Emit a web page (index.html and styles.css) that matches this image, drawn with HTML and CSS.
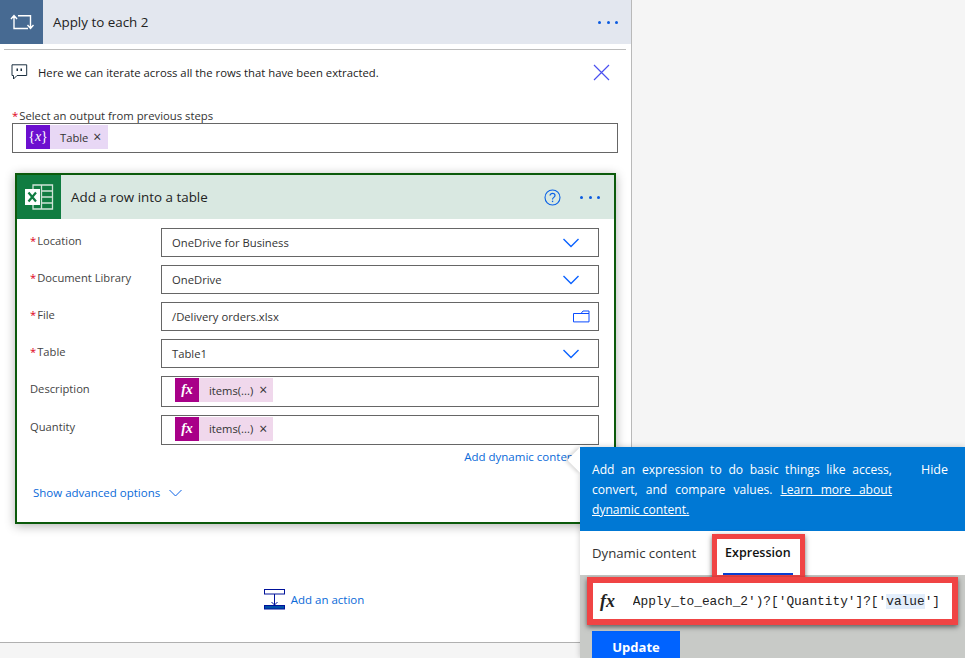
FILE: index.html
```html
<!DOCTYPE html>
<html lang="en">
<head>
<meta charset="utf-8">
<title>Apply to each 2</title>
<link rel="stylesheet" href="styles.css">
</head>
<body>
<main class="panel">
  <header class="loop-head">
    <div class="loop-icon">
      <svg width="24" height="16" viewBox="0 0 24 16" fill="none" stroke="#fff" stroke-width="1.4"><path d="M1 5 L4 1.5 L7 5 M4 2 V14.5 H18 M8 1.7 H20.5 V14 M17.500 11 L20.500 14.500 L23.500 11"/></svg>
    </div>
    <h1 class="loop-title">Apply to each 2</h1>
    <div class="dots"><i></i><i></i><i></i></div>
  </header>
  <div class="rule"></div>
  <div class="note">
    <svg class="note-icon" width="17" height="17" viewBox="0 0 17 17" fill="none"><path d="M1 .8 H15.700 V11.500 H6 L2.500 15 V11.500 H1 Z" stroke="#1c3040" stroke-width="1"/><rect x="5.500" y="4.500" width="1.500" height="2.500" fill="#1c3040"/><rect x="9.500" y="4.500" width="1.500" height="2.500" fill="#1c3040"/></svg>
    <span class="note-text">Here we can iterate across all the rows that have been extracted.</span>
    <svg class="note-close" width="17" height="17" viewBox="0 0 17 17" fill="none"><path d="M1 1 L16 16 M16 1 L1 16" stroke="#4a50f0" stroke-width="1.200"/></svg>
  </div>
  <label class="out-label"><span class="req">*</span>Select an output from previous steps</label>
  <div class="out-field">
    <span class="chip chip-var"><span class="chip-icon chip-icon-var">{<em>x</em>}</span><span class="chip-text">Table</span><span class="chip-x">×</span></span>
  </div>

  <section class="card">
    <header class="card-head">
      <div class="excel">
        <svg width="30" height="26" viewBox="0 0 30 26"><path d="M9 1 H28.500 V25 H9 Z" fill="none" stroke="#cfe3d7" stroke-width="1.300"/><path d="M17.500 1 V25 M17.500 7 H28.500 M17.500 13 H28.500 M17.500 19 H28.500" stroke="#cfe3d7" stroke-width="1.300"/><rect x="1" y="5" width="15" height="16" fill="#fff"/><path d="M4.500 8.500 L12 17.500 M12 8.500 L4.500 17.500" stroke="#107c41" stroke-width="2.200"/></svg>
      </div>
      <h2 class="card-title">Add a row into a table</h2>
      <svg class="help" width="17" height="17" viewBox="0 0 17 17" fill="none"><circle cx="8.500" cy="8.500" r="7.500" stroke="#0b62e6" stroke-width="1.100"/><path d="M6 6.600 C6 3.700 11 3.800 11 6.500 C11 8.500 8.500 8.300 8.500 10.500" stroke="#0b62e6" stroke-width="1.200"/><rect x="7.900" y="11.700" width="1.300" height="1.400" fill="#0b62e6"/></svg>
      <div class="dots"><i></i><i></i><i></i></div>
    </header>
    <div class="form">
      <div class="row"><label class="lab"><span class="req">*</span>Location</label><div class="input"><span class="val">OneDrive for Business</span><svg class="chev" width="16" height="10" viewBox="0 0 16 10" fill="none"><path d="M.5 1 L8 8.500 L15.500 1" stroke="#0b62ff" stroke-width="1.400"/></svg></div></div>
      <div class="row"><label class="lab"><span class="req">*</span>Document Library</label><div class="input"><span class="val">OneDrive</span><svg class="chev" width="16" height="10" viewBox="0 0 16 10" fill="none"><path d="M.5 1 L8 8.500 L15.500 1" stroke="#0b62ff" stroke-width="1.400"/></svg></div></div>
      <div class="row"><label class="lab"><span class="req">*</span>File</label><div class="input"><span class="val">/Delivery orders.xlsx</span><svg class="folder" width="17" height="13" viewBox="0 0 17 13" fill="none"><path d="M.5 3.500 H16 V11.900 H.5 Z M8 3.500 L10 1 H16 V3.500" stroke="#0b4cff" stroke-width="1"/></svg></div></div>
      <div class="row"><label class="lab"><span class="req">*</span>Table</label><div class="input"><span class="val">Table1</span><svg class="chev" width="16" height="10" viewBox="0 0 16 10" fill="none"><path d="M.5 1 L8 8.500 L15.500 1" stroke="#0b62ff" stroke-width="1.400"/></svg></div></div>
      <div class="row"><label class="lab">Description</label><div class="input input-chip"><span class="chip chip-fx"><span class="chip-icon chip-icon-fx"><em>fx</em></span><span class="chip-text">items(...)</span><span class="chip-x">×</span></span></div></div>
      <div class="row"><label class="lab">Quantity</label><div class="input input-chip"><span class="chip chip-fx"><span class="chip-icon chip-icon-fx"><em>fx</em></span><span class="chip-text">items(...)</span><span class="chip-x">×</span></span></div></div>
    </div>
    <div class="dyn-row"><a class="link">Add dynamic content</a></div>
    <div class="adv"><a class="link">Show advanced options</a><svg width="13" height="8" viewBox="0 0 13 8" fill="none"><path d="M.5 1 L6.500 7 L12.500 1" stroke="#0b62e6" stroke-width="1"/></svg></div>
  </section>

  <div class="add-action">
    <svg width="22" height="21" viewBox="0 0 22 21" fill="none"><rect x=".5" y=".5" width="20" height="4.500" stroke="#00129a" stroke-width="1"/><path d="M10.500 5 V16 M7.500 13 L10.500 16 L13.500 13" stroke="#00129a" stroke-width="1"/><rect x=".5" y="16.500" width="20" height="3.500" fill="#0050a8" stroke="#00129a" stroke-width="1"/></svg>
    <a class="link">Add an action</a>
  </div>
</main>

<aside class="popup">
  <span class="notch"></span>
  <div class="tip">
    <p class="tip-text">Add an expression to do basic things like access, convert, and compare values. <u>Learn more about dynamic content.</u></p>
    <span class="tip-hide">Hide</span>
  </div>
  <nav class="tabs">
    <span class="tab">Dynamic content</span>
    <span class="tab tab-on">Expression</span>
    <span class="mark mark-tab"></span>
  </nav>
  <div class="expr-area">
    <div class="expr-box">
      <em class="expr-fx">fx</em>
      <div class="expr-code"><span>'Apply_to_each_2')?['Quantity']?['<span class="hl">value</span>']</span></div>
    </div>
    <button class="update">Update</button>
  </div>
</aside>
</body>
</html>
```
FILE: styles.css
```css
* { box-sizing: border-box; }
html, body { margin: 0; padding: 0; }
body {
  position: relative;
  width: 965px;
  height: 658px;
  overflow: hidden;
  background: #f5f5f5;
  font-family: "Open Sans", "Noto Sans", sans-serif;
  font-size: 12px;
  color: #222;
}
h1, h2, p { margin: 0; font-weight: 400; }
em { font-family: "Liberation Serif", serif; font-style: italic; }

.panel {
  width: 632px;
  height: 643px;
  background: #fff;
  border-right: 1px solid #b9b9b9;
  border-bottom: 1px solid #b0b0b0;
}

.loop-head { display: flex; align-items: center; height: 44px; background: #e3e7ef; }
.loop-icon { width: 43px; height: 44px; background: #476a92; display: flex; align-items: center; justify-content: center; }
.loop-title { flex: 1; padding-left: 10px; font-size: 13.400px; color: #222; }
.dots { display: flex; gap: 5.500px; margin-right: 13px; }
.dots i { width: 3px; height: 3px; border-radius: 50%; background: #0b5be0; }
.rule { height: 1px; margin: 5px 5px 0 4px; background: #bdbdbd; }

.note { display: flex; align-items: center; height: 34px; margin-top: 5px; padding-left: 11px; }
.note-icon { flex: none; }
.note-text { flex: 1; padding-left: 10px; font-size: 11.300px; color: #222; }
.note-close { flex: none; margin-right: 21px; }

.out-label { display: block; margin-top: 19px; padding-left: 12px; font-size: 11.300px; line-height: 16px; color: #333; }
.req { color: #e00020; margin-right: 1px; }
.out-field { display: flex; align-items: center; height: 30px; margin: -1px 13px 0 12px; padding-left: 13px; border: 1px solid #666; padding-bottom: 2px; }

.chip { display: inline-flex; align-items: center; height: 24px; }
.chip-var { background: #e8d8f5; }
.chip-fx { background: #f0d8ec; }
.chip-icon { width: 24px; height: 24px; display: flex; align-items: center; justify-content: center; color: #fff; }
.chip-icon-var { background: #6c0fcf; font-family: "Liberation Serif", serif; font-size: 14px; }
.chip-icon-fx { background: #a80088; font-size: 14px; font-weight: 700; }
.chip-text { padding-left: 10px; font-size: 11.200px; color: #333; }
.chip-x { padding: 0 7px 0 5px; font-size: 14px; line-height: 14px; color: #333; }
.chip-fx .chip-x { padding: 0 6px 0 6px; }

.card {
  width: 601px;
  height: 351px;
  margin: 20px 0 0 15px;
  border: 2px solid #0b5a0b;
  box-shadow: 0 2px 10px rgba(0, 0, 0, .3);
  background: #fff;
}
.card-head { display: flex; align-items: center; height: 44px; background: #d9e8e1; }
.excel { width: 44px; height: 44px; background: #107c41; display: flex; align-items: center; justify-content: center; }
.card-title { flex: 1; padding-left: 10px; font-size: 13.400px; color: #222; }
.help { margin-right: 19px; }
.card-head .dots { margin-right: 14px; }

.form { display: flex; flex-direction: column; gap: 8px; padding: 9px 15px 0 13px; }
.row { display: flex; }
.lab { width: 131px; padding-top: 5px; font-size: 11.200px; line-height: 16px; color: #444; flex: none; }
.row:last-child .lab { padding-top: 4px; }
.input { flex: 1; display: flex; align-items: center; height: 29px; padding: 0 10px; border: 1px solid #666; }
.input-chip { height: 31px; padding: 0 0 3px 13px; }
.row:last-child .input-chip { height: 30px; }
.val { flex: 1; padding-bottom: 1px; font-size: 11.250px; color: #333; }
.chev { margin-right: 9px; flex: none; }
.folder { flex: none; margin-right: -2px; }
.link { color: #0a6ad8; font-size: 11.500px; }

.dyn-row { display: flex; justify-content: flex-end; margin-top: 3px; padding-right: 36px; line-height: 18px; white-space: nowrap; }
.adv { display: flex; align-items: center; gap: 9px; margin-top: 18px; padding-left: 16px; line-height: 18px; }

.add-action { display: flex; align-items: center; justify-content: center; gap: 5px; margin: 65px 0 0 -3px; }

.popup { position: absolute; left: 580px; top: 447px; width: 385px; height: 211px; display: flex; flex-direction: column; box-shadow: 0 0 6px rgba(0, 0, 0, .2); }
.notch { position: absolute; left: -9px; top: 4px; width: 18px; height: 18px; background: #fff; transform: rotate(45deg); box-shadow: -2px 2px 4px rgba(0, 0, 0, .15); }
.tip { position: relative; flex: none; display: flex; height: 84px; padding: 13px 17px 0 12px; background: #0078d4; color: #fff; }
.tip-text { width: 300px; font-size: 12.100px; line-height: 20px; text-align: justify; }
.tip-hide { margin-left: auto; font-size: 12.500px; line-height: 20px; }

.tabs { position: relative; flex: none; display: flex; height: 44px; padding-left: 12px; background: #fff; align-items: center; z-index: 1; }
.tab { font-size: 13.200px; line-height: 18px; color: #333; }
.tab-on { position: relative; margin-left: 29px; color: #111; font-weight: 600; font-size: 12.500px; }
.tab-on::after { content: ""; position: absolute; left: -2px; right: -2px; top: 29px; height: 2px; background: #0a3fd0; }
.mark { position: absolute; border: 5px solid #f04444; box-shadow: 0 2px 5px rgba(0, 0, 0, .55); }
.mark-tab { left: 132px; top: 3px; width: 93px; height: 46px; }

.expr-area { flex: 1; min-height: 0; overflow: hidden; background: #c8cac7; padding: 2px 7px 0 7px; }
.expr-box { position: relative; z-index: 1; display: flex; align-items: center; height: 48px; background: #fff; border: 6px solid #f04444; box-shadow: 0 2px 5px rgba(0, 0, 0, .55); padding-left: 7px; padding-right: 12px; }
.expr-fx { flex: none; width: 33px; font-size: 18px; font-weight: 700; color: #222; }
.expr-code { flex: 1; display: flex; justify-content: flex-end; overflow: hidden; padding-top: 1px; white-space: nowrap; font-family: "Liberation Mono", monospace; font-size: 12.800px; color: #222; }
.expr-code > span { flex: none; }
.hl { background: #e3eefb; }
.update { display: block; width: 88px; height: 32px; margin: 6px 0 0 5px; padding: 0; border: 0; background: #0063ff; color: #fff; font: 700 13px "Open Sans", sans-serif; }
```
